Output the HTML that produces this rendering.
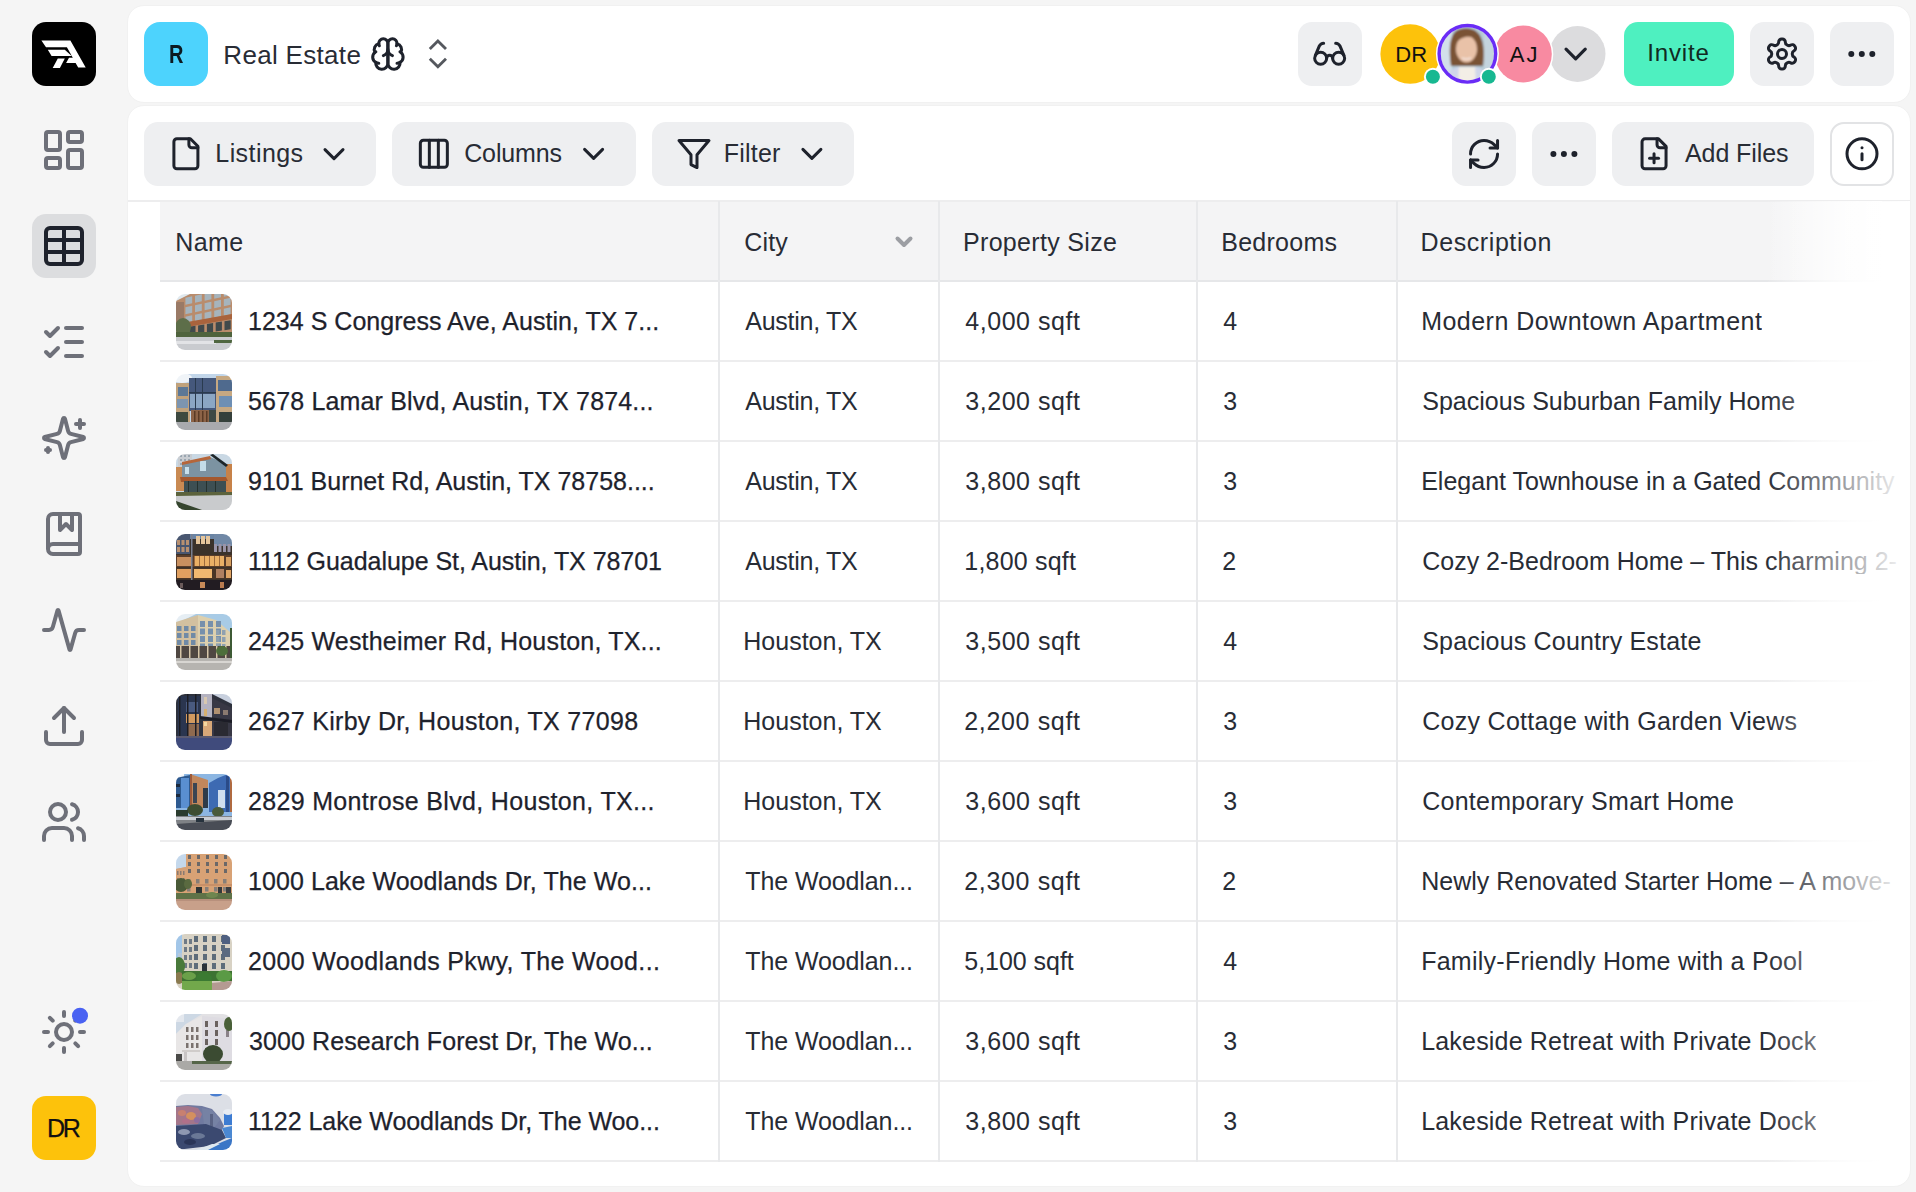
<!DOCTYPE html>
<html><head><meta charset="utf-8"><style>
html,body{margin:0;padding:0;}
body{width:1916px;height:1192px;overflow:hidden;background:#f5f5f5;position:relative;font-family:"Liberation Sans",sans-serif;}
svg{position:absolute;left:0;top:0;}
.t{position:absolute;white-space:nowrap;}
</style></head><body>
<svg width="1916" height="1192" viewBox="0 0 1916 1192"><defs><filter id="soft" x="-5%" y="-5%" width="110%" height="110%"><feGaussianBlur stdDeviation="0.7"/></filter><filter id="soft2" x="-5%" y="-5%" width="110%" height="110%"><feGaussianBlur stdDeviation="0.8"/></filter></defs><rect x="32" y="22" width="64" height="64" rx="14" fill="#000"/><path d="M41.40,40.50 L70.40,40.50 L85.70,67.60 L78.20,67.60 L75.60,63.10 L66.10,63.10 L69.00,57.70 L72.80,57.70 L66.90,47.20 L46.00,47.20Z M47.80,49.70 L64.80,49.70 L71.70,56.00 L51.60,56.00Z M57.80,58.50 L64.80,58.50 L59.90,67.90 L52.70,67.90Z" fill="#fff"/><rect x="32" y="214" width="64" height="64" rx="14" fill="#dcdddf"/><g transform="translate(40.00,126.00) scale(2)" stroke="#6e7079" stroke-width="2" fill="none" stroke-linecap="round" stroke-linejoin="round"><rect width="7" height="9" x="3" y="3" rx="1"/><rect width="7" height="5" x="14" y="3" rx="1"/><rect width="7" height="9" x="14" y="12" rx="1"/><rect width="7" height="5" x="3" y="16" rx="1"/></g><g transform="translate(40.00,222.00) scale(2)" stroke="#1e222c" stroke-width="2" fill="none" stroke-linecap="round" stroke-linejoin="round"><path d="M12 3v18"/><rect width="18" height="18" x="3" y="3" rx="2"/><path d="M3 9h18"/><path d="M3 15h18"/></g><g transform="translate(40.00,318.00) scale(2)" stroke="#6e7079" stroke-width="2" fill="none" stroke-linecap="round" stroke-linejoin="round"><path d="M13 5h8"/><path d="M13 12h8"/><path d="M13 19h8"/><path d="m3 17 2 2 4-4"/><path d="m3 7 2 2 4-4"/></g><g transform="translate(40.00,414.00) scale(2)" stroke="#6e7079" stroke-width="2" fill="none" stroke-linecap="round" stroke-linejoin="round"><path d="M9.937 15.5A2 2 0 0 0 8.5 14.063l-6.135-1.582a.5.5 0 0 1 0-.962L8.5 9.936A2 2 0 0 0 9.937 8.5l1.582-6.135a.5.5 0 0 1 .963 0L14.063 8.5A2 2 0 0 0 15.5 9.937l6.135 1.581a.5.5 0 0 1 0 .964L15.5 14.063a2 2 0 0 0-1.437 1.437l-1.582 6.135a.5.5 0 0 1-.963 0z"/><path d="M20 3v4"/><path d="M22 5h-4"/><path d="M4 17v2"/><path d="M5 18H3"/></g><g transform="translate(40.00,510.00) scale(2)" stroke="#6e7079" stroke-width="2" fill="none" stroke-linecap="round" stroke-linejoin="round"><path d="M10 2v8l3-3 3 3V2"/><path d="M4 19.5v-15A2.5 2.5 0 0 1 6.5 2H19a1 1 0 0 1 1 1v18a1 1 0 0 1-1 1H6.5a1 1 0 0 1 0-5H20"/></g><g transform="translate(40.00,606.00) scale(2)" stroke="#6e7079" stroke-width="2" fill="none" stroke-linecap="round" stroke-linejoin="round"><path d="M22 12h-2.48a2 2 0 0 0-1.93 1.46l-2.35 8.36a.25.25 0 0 1-.48 0L9.24 2.18a.25.25 0 0 0-.48 0l-2.35 8.36A2 2 0 0 1 4.49 12H2"/></g><g transform="translate(40.00,702.00) scale(2)" stroke="#6e7079" stroke-width="2" fill="none" stroke-linecap="round" stroke-linejoin="round"><path d="M12 3v12"/><path d="m17 8-5-5-5 5"/><path d="M21 15v4a2 2 0 0 1-2 2H5a2 2 0 0 1-2-2v-4"/></g><g transform="translate(40.00,798.00) scale(2)" stroke="#6e7079" stroke-width="2" fill="none" stroke-linecap="round" stroke-linejoin="round"><path d="M16 21v-2a4 4 0 0 0-4-4H6a4 4 0 0 0-4 4v2"/><circle cx="9" cy="7" r="4"/><path d="M22 21v-2a4 4 0 0 0-3-3.87"/><path d="M16 3.13a4 4 0 0 1 0 7.75"/></g><g transform="translate(40.00,1008.00) scale(2)" stroke="#6e7079" stroke-width="2" fill="none" stroke-linecap="round" stroke-linejoin="round"><circle cx="12" cy="12" r="4"/><path d="M12 2v2"/><path d="M12 20v2"/><path d="m4.93 4.93 1.41 1.41"/><path d="m17.66 17.66 1.41 1.41"/><path d="M2 12h2"/><path d="M20 12h2"/><path d="m6.34 17.66-1.41 1.41"/><path d="m19.07 4.93-1.41 1.41"/></g><circle cx="80" cy="1015.7" r="8" fill="#4a62f2"/><rect x="32" y="1096" width="64" height="64" rx="14" fill="#fdc20b"/><rect x="127.5" y="5.5" width="1783" height="97" rx="16.5" fill="#fff" stroke="#f1f1f1" stroke-width="1"/><rect x="144" y="22" width="64" height="64" rx="16" fill="#4dd3fd"/><g transform="translate(369.66,35.81) scale(1.52)" stroke="#1e222c" stroke-width="2" fill="none" stroke-linecap="round" stroke-linejoin="round"><path d="M12 5a3 3 0 1 0-5.997.125 4 4 0 0 0-2.526 5.77 4 4 0 0 0 .556 6.588A4 4 0 1 0 12 18Z"/><path d="M12 5a3 3 0 1 1 5.997.125 4 4 0 0 1 2.526 5.77 4 4 0 0 1-.556 6.588A4 4 0 1 1 12 18Z"/><path d="M15 13a4.5 4.5 0 0 1-3-4 4.5 4.5 0 0 1-3 4"/><path d="M17.599 6.5a3 3 0 0 0 .399-1.375"/><path d="M6.003 5.125A3 3 0 0 0 6.401 6.5"/><path d="M3.477 10.896a4 4 0 0 1 .585-.396"/><path d="M19.938 10.5a4 4 0 0 1 .585.396"/><path d="M6 18a4 4 0 0 1-1.967-.516"/><path d="M19.967 17.484A4 4 0 0 1 18 18"/></g><g transform="translate(418.46,34.46) scale(1.62)" stroke="#55585e" stroke-width="1.75" fill="none" stroke-linecap="butt" stroke-linejoin="miter"><path d="m7 15 5 5 5-5"/><path d="m7 9 5-5 5 5"/></g><rect x="1298" y="22" width="64" height="64" rx="14" fill="#eeeff1"/><g transform="translate(1311.65,35.80) scale(1.5)" stroke="#1e222c" stroke-width="2" fill="none" stroke-linecap="round" stroke-linejoin="round"><circle cx="6" cy="15" r="4"/><circle cx="18" cy="15" r="4"/><path d="M14 15a2 2 0 0 0-2-2 2 2 0 0 0-2 2"/><path d="M2.5 13 5 7c.7-1.3 1.4-2 3-2"/><path d="M21.5 13 19 7c-.7-1.3-1.5-2-3-2"/></g><circle cx="1577.5" cy="54" r="30" fill="#fff"/><circle cx="1577.5" cy="54" r="28" fill="#dcdcde"/><g transform="translate(1556.45,34.80) scale(1.6)" stroke="#1e222c" stroke-width="2" fill="none" stroke-linecap="round" stroke-linejoin="round"><path d="m6 9 6 6 6-6"/></g><circle cx="1523.3" cy="54" r="30" fill="#fff"/><circle cx="1523.3" cy="54" r="28.5" fill="#f88aa1"/><circle cx="1410.2" cy="54" r="29.8" fill="#fdc20b"/><circle cx="1467.4" cy="53.8" r="31.5" fill="#fff"/><clipPath id="pc"><circle cx="1467.4" cy="53.8" r="26.8"/></clipPath>
<g clip-path="url(#pc)"><g filter="url(#soft2)">
 <rect x="1438" y="24" width="60" height="60" fill="#b4cad6"/>
 <rect x="1438" y="24" width="14" height="60" fill="#d2e0ea"/>
 <rect x="1484" y="24" width="14" height="60" fill="#c4d4de"/>
 <path d="M1451,66 C1449,52 1449,38 1455,32 C1460,27 1472,27 1477,32 C1484,38 1485,52 1483,66 Z" fill="#7a5234"/>
 <ellipse cx="1466.5" cy="49" rx="10.5" ry="13.5" fill="#e9c2a8"/>
 <path d="M1455,44 C1456,34 1462,31 1468,31 C1474,31 1478,35 1478,41 C1472,35 1462,35 1455,44 Z" fill="#7a5234"/>
 <path d="M1462,58 Q1466,60 1471,58" stroke="#f4e6e0" stroke-width="1.6" fill="none"/>
 <path d="M1444,84 Q1446,70 1458,67 L1476,67 Q1488,70 1490,84 Z" fill="#d0d6ea"/>
 <path d="M1458,84 L1459,67 L1475,67 L1476,84 Z" fill="#f3eee6"/>
</g></g><circle cx="1467.4" cy="53.8" r="28.3" fill="none" stroke="#6a2cf6" stroke-width="3.4"/><circle cx="1432.9" cy="76.8" r="9" fill="#fff"/><circle cx="1432.9" cy="76.8" r="7" fill="#17b891"/><circle cx="1488.8" cy="76.8" r="9" fill="#fff"/><circle cx="1488.8" cy="76.8" r="7" fill="#17b891"/><rect x="1624" y="22" width="110" height="64" rx="14" fill="#4ef0c0"/><rect x="1750" y="22" width="64" height="64" rx="14" fill="#eeeff1"/><g transform="translate(1764.00,35.95) scale(1.5)" stroke="#1e222c" stroke-width="2" fill="none" stroke-linecap="round" stroke-linejoin="round"><path d="M12.22 2h-.44a2 2 0 0 0-2 2v.18a2 2 0 0 1-1 1.73l-.43.25a2 2 0 0 1-2 0l-.15-.08a2 2 0 0 0-2.73.73l-.22.38a2 2 0 0 0 .73 2.73l.15.1a2 2 0 0 1 1 1.72v.51a2 2 0 0 1-1 1.74l-.15.09a2 2 0 0 0-.73 2.73l.22.38a2 2 0 0 0 2.73.73l.15-.08a2 2 0 0 1 2 0l.43.25a2 2 0 0 1 1 1.73V20a2 2 0 0 0 2 2h.44a2 2 0 0 0 2-2v-.18a2 2 0 0 1 1-1.73l.43-.25a2 2 0 0 1 2 0l.15.08a2 2 0 0 0 2.73-.73l.22-.39a2 2 0 0 0-.73-2.73l-.15-.08a2 2 0 0 1-1-1.74v-.5a2 2 0 0 1 1-1.74l.15-.09a2 2 0 0 0 .73-2.73l-.22-.38a2 2 0 0 0-2.73-.73l-.15.08a2 2 0 0 1-2 0l-.43-.25a2 2 0 0 1-1-1.73V4a2 2 0 0 0-2-2z"/><circle cx="12" cy="12" r="3"/></g><rect x="1830" y="22" width="64" height="64" rx="14" fill="#eeeff1"/><g transform="translate(1843.80,35.90) scale(1.5)" stroke="#1e222c" stroke-width="2" fill="none" stroke-linecap="round" stroke-linejoin="round"><circle cx="12" cy="12" r="1"/><circle cx="19" cy="12" r="1"/><circle cx="5" cy="12" r="1"/></g><rect x="127.5" y="105.5" width="1783" height="1081" rx="16.5" fill="#fff" stroke="#f1f1f1" stroke-width="1"/><rect x="144" y="122" width="232" height="64" rx="14" fill="#eeeff1"/><rect x="392" y="122" width="244" height="64" rx="14" fill="#eeeff1"/><rect x="652" y="122" width="202" height="64" rx="14" fill="#eeeff1"/><rect x="1452" y="122" width="64" height="64" rx="14" fill="#eeeff1"/><rect x="1532" y="122" width="64" height="64" rx="14" fill="#eeeff1"/><rect x="1612" y="122" width="202" height="64" rx="14" fill="#eeeff1"/><rect x="1831" y="123" width="62" height="62" rx="13" fill="#fff" stroke="#e2e3e5" stroke-width="2"/><g transform="translate(167.90,135.70) scale(1.5)" stroke="#1e222c" stroke-width="2" fill="none" stroke-linecap="round" stroke-linejoin="round"><path d="M15 2H6a2 2 0 0 0-2 2v16a2 2 0 0 0 2 2h12a2 2 0 0 0 2-2V7Z"/><path d="M14 2v4a2 2 0 0 0 2 2h4"/></g><g transform="translate(316.00,136.15) scale(1.5)" stroke="#1e222c" stroke-width="2" fill="none" stroke-linecap="round" stroke-linejoin="round"><path d="m6 9 6 6 6-6"/></g><g transform="translate(415.85,135.80) scale(1.5)" stroke="#1e222c" stroke-width="2" fill="none" stroke-linecap="round" stroke-linejoin="round"><rect width="18" height="18" x="3" y="3" rx="2"/><path d="M9 3v18"/><path d="M15 3v18"/></g><g transform="translate(575.60,135.90) scale(1.5)" stroke="#1e222c" stroke-width="2" fill="none" stroke-linecap="round" stroke-linejoin="round"><path d="m6 9 6 6 6-6"/></g><g transform="translate(676.00,136.05) scale(1.5)" stroke="#1e222c" stroke-width="2" fill="none" stroke-linecap="round" stroke-linejoin="round"><polygon points="22 3 2 3 10 12.46 10 19 14 21 14 12.46 22 3"/></g><g transform="translate(793.90,135.90) scale(1.5)" stroke="#1e222c" stroke-width="2" fill="none" stroke-linecap="round" stroke-linejoin="round"><path d="m6 9 6 6 6-6"/></g><g transform="translate(1466.05,135.95) scale(1.5)" stroke="#1e222c" stroke-width="2" fill="none" stroke-linecap="round" stroke-linejoin="round"><path d="M3 12a9 9 0 0 1 9-9 9.75 9.75 0 0 1 6.74 2.74L21 8"/><path d="M21 3v5h-5"/><path d="M21 12a9 9 0 0 1-9 9 9.75 9.75 0 0 1-6.74-2.74L3 16"/><path d="M8 16H3v5"/></g><g transform="translate(1545.90,136.00) scale(1.5)" stroke="#1e222c" stroke-width="2" fill="none" stroke-linecap="round" stroke-linejoin="round"><circle cx="12" cy="12" r="1"/><circle cx="19" cy="12" r="1"/><circle cx="5" cy="12" r="1"/></g><g transform="translate(1636.05,135.85) scale(1.5)" stroke="#1e222c" stroke-width="2" fill="none" stroke-linecap="round" stroke-linejoin="round"><path d="M15 2H6a2 2 0 0 0-2 2v16a2 2 0 0 0 2 2h12a2 2 0 0 0 2-2V7Z"/><path d="M14 2v4a2 2 0 0 0 2 2h4"/><path d="M9 15h6"/><path d="M12 18v-6"/></g><g transform="translate(1844.00,135.85) scale(1.5)" stroke="#1e222c" stroke-width="2" fill="none" stroke-linecap="round" stroke-linejoin="round"><circle cx="12" cy="12" r="10"/><path d="M12 16v-4"/><path d="M12 8h.01"/></g><rect x="128" y="200" width="1782" height="2" fill="#ededee"/><rect x="160" y="202" width="1722" height="79" fill="#f4f4f5"/><rect x="160" y="280" width="1722" height="2" fill="#e6e7e9"/><rect x="160" y="360" width="1722" height="2" fill="#ededee"/><rect x="160" y="440" width="1722" height="2" fill="#ededee"/><rect x="160" y="520" width="1722" height="2" fill="#ededee"/><rect x="160" y="600" width="1722" height="2" fill="#ededee"/><rect x="160" y="680" width="1722" height="2" fill="#ededee"/><rect x="160" y="760" width="1722" height="2" fill="#ededee"/><rect x="160" y="840" width="1722" height="2" fill="#ededee"/><rect x="160" y="920" width="1722" height="2" fill="#ededee"/><rect x="160" y="1000" width="1722" height="2" fill="#ededee"/><rect x="160" y="1080" width="1722" height="2" fill="#ededee"/><rect x="160" y="1160" width="1722" height="2" fill="#ededee"/><rect x="718" y="201" width="2" height="961" fill="#e8e9eb"/><rect x="938" y="201" width="2" height="961" fill="#e8e9eb"/><rect x="1196" y="201" width="2" height="961" fill="#e8e9eb"/><rect x="1396" y="201" width="2" height="961" fill="#e8e9eb"/><defs><linearGradient id="fadeA" x1="0" x2="1"><stop offset="0" stop-color="#fff" stop-opacity="0"/><stop offset="1" stop-color="#fff" stop-opacity="1"/></linearGradient></defs><rect x="1765" y="201" width="117" height="961" fill="url(#fadeA)"/><path d="M897.5,238.5 L904,245 L910.5,238.5" stroke="#9c9ea3" stroke-width="4" fill="none" stroke-linecap="round" stroke-linejoin="round"/><clipPath id="th0"><rect x="176" y="294" width="56" height="56" rx="9"/></clipPath><g clip-path="url(#th0)"><g transform="translate(176,294)" filter="url(#soft)"><rect x="0" y="0" width="56" height="56" fill="#b98c6c"/><path d="M0,0 L14,0 L0,7Z" fill="#dfe8ee"/><path d="M9.4,3.7 L16.2,2.3 L16.2,9.3 L9.4,10.7Z" fill="#a6b4bd"/><path d="M19.0,1.7 L25.8,0.3 L25.8,7.3 L19.0,8.7Z" fill="#a6b4bd"/><path d="M28.6,-0.3 L35.4,-1.7 L35.4,5.3 L28.6,6.7Z" fill="#a6b4bd"/><path d="M38.2,-2.3 L45.0,-3.7 L45.0,3.3 L38.2,4.7Z" fill="#a6b4bd"/><path d="M47.8,-4.3 L54.6,-5.7 L54.6,1.3 L47.8,2.7Z" fill="#a6b4bd"/><path d="M9.4,13.2 L16.2,11.8 L16.2,18.8 L9.4,20.2Z" fill="#a6b4bd"/><path d="M19.0,11.2 L25.8,9.8 L25.8,16.8 L19.0,18.2Z" fill="#a6b4bd"/><path d="M28.6,9.2 L35.4,7.8 L35.4,14.8 L28.6,16.2Z" fill="#a6b4bd"/><path d="M38.2,7.2 L45.0,5.8 L45.0,12.8 L38.2,14.2Z" fill="#a6b4bd"/><path d="M47.8,5.2 L54.6,3.8 L54.6,10.8 L47.8,12.2Z" fill="#a6b4bd"/><path d="M9.4,22.7 L16.2,21.3 L16.2,28.3 L9.4,29.7Z" fill="#a6b4bd"/><path d="M19.0,20.7 L25.8,19.3 L25.8,26.3 L19.0,27.7Z" fill="#a6b4bd"/><path d="M28.6,18.7 L35.4,17.3 L35.4,24.3 L28.6,25.7Z" fill="#a6b4bd"/><path d="M38.2,16.7 L45.0,15.3 L45.0,22.3 L38.2,23.7Z" fill="#a6b4bd"/><path d="M47.8,14.7 L54.6,13.3 L54.6,20.3 L47.8,21.7Z" fill="#a6b4bd"/><path d="M0,30 L56,20 L56,25 L0,35Z" fill="#a9643e"/><path d="M13.3,32.8 L19.5,31.8 L19.5,40.8 L13.3,41.8Z" fill="#3f484c"/><path d="M22.1,31.4 L28.3,30.4 L28.3,39.4 L22.1,40.4Z" fill="#3f484c"/><path d="M30.9,30.0 L37.1,29.0 L37.1,38.0 L30.9,39.0Z" fill="#3f484c"/><path d="M39.7,28.6 L45.9,27.6 L45.9,36.6 L39.7,37.6Z" fill="#3f484c"/><path d="M48.5,27.2 L54.7,26.2 L54.7,35.2 L48.5,36.2Z" fill="#3f484c"/><rect x="0" y="8" width="8" height="36" fill="#9a7a66"/><ellipse cx="7" cy="33" rx="8" ry="9" fill="#5d6e4a"/><rect x="0" y="38" width="56" height="6" fill="#50633c"/><rect x="0" y="43" width="56" height="13" fill="#c9cbcf"/><rect x="0" y="47" width="40" height="3" fill="#e2e3e6"/><rect x="38" y="46" width="18" height="3" fill="#4f6640"/></g></g><clipPath id="th1"><rect x="176" y="374" width="56" height="56" rx="9"/></clipPath><g clip-path="url(#th1)"><g transform="translate(176,374)" filter="url(#soft)"><rect x="0" y="0" width="56" height="56" fill="#c2d6ea"/><ellipse cx="6" cy="4" rx="10" ry="5" fill="#f0f4f8"/><rect x="0" y="9" width="14" height="40" fill="#c0a27c"/><rect x="2" y="13" width="10" height="9" fill="#5d7896"/><rect x="1" y="25" width="11" height="9" fill="#7d95b0"/><rect x="40" y="2" width="16" height="47" fill="#c6a882"/><rect x="42" y="6" width="14" height="11" fill="#4f6a8e"/><rect x="43" y="22" width="13" height="11" fill="#6e8fb4"/><rect x="13" y="4" width="27" height="33" fill="#44597c"/><rect x="14" y="20" width="25" height="14" fill="#8ba6c4"/><rect x="19" y="4" width="1" height="33" fill="#2c3a50"/><rect x="26" y="4" width="1" height="33" fill="#2c3a50"/><rect x="13" y="18" width="27" height="1.5" fill="#2c3a50"/><rect x="15" y="36" width="18" height="13" fill="#8c6446"/><rect x="18" y="37" width="1.5" height="12" fill="#5a3a26"/><rect x="22" y="37" width="1.5" height="12" fill="#5a3a26"/><rect x="26" y="37" width="1.5" height="12" fill="#5a3a26"/><rect x="30" y="37" width="1.5" height="12" fill="#5a3a26"/><rect x="33" y="36" width="7" height="13" fill="#3c4a44"/><rect x="0" y="38" width="12" height="10" fill="#3c4a40"/><rect x="43" y="38" width="13" height="10" fill="#34403a"/><rect x="0" y="48" width="56" height="8" fill="#a9aaae"/></g></g><clipPath id="th2"><rect x="176" y="454" width="56" height="56" rx="9"/></clipPath><g clip-path="url(#th2)"><g transform="translate(176,454)" filter="url(#soft)"><rect x="0" y="0" width="56" height="56" fill="#c9d8e4"/><rect x="2" y="0" width="14" height="14" fill="#c9cdd2"/><rect x="4" y="1" width="2" height="2" fill="#9aa6b0"/><rect x="4" y="5" width="2" height="2" fill="#9aa6b0"/><rect x="4" y="9" width="2" height="2" fill="#9aa6b0"/><rect x="8" y="1" width="2" height="2" fill="#9aa6b0"/><rect x="8" y="5" width="2" height="2" fill="#9aa6b0"/><rect x="8" y="9" width="2" height="2" fill="#9aa6b0"/><rect x="12" y="1" width="2" height="2" fill="#9aa6b0"/><rect x="12" y="5" width="2" height="2" fill="#9aa6b0"/><rect x="12" y="9" width="2" height="2" fill="#9aa6b0"/><rect x="0" y="13" width="8" height="24" fill="#c98a52"/><rect x="48" y="10" width="8" height="30" fill="#c7824a"/><path d="M6,10 L34,3 L50,10 L50,25 L6,25Z" fill="#7b93a2"/><rect x="24" y="7" width="6" height="10" fill="#c4dce8"/><rect x="9" y="13" width="4" height="7" fill="#c8e0ec"/><path d="M6,8 L34,2 L35,5 L6,11Z" fill="#b5663a"/><path d="M34,1 L37,0 L52,11 L50,13Z" fill="#1f2529"/><path d="M4,23 L50,23 L52,27 L5,28Z" fill="#a4582f"/><rect x="8" y="27" width="42" height="15" fill="#3d4f52"/><rect x="12" y="27" width="1" height="15" fill="#26302f"/><rect x="21" y="27" width="1" height="15" fill="#26302f"/><rect x="30" y="27" width="1" height="15" fill="#26302f"/><rect x="39" y="27" width="1" height="15" fill="#26302f"/><rect x="0" y="38" width="56" height="7" fill="#5b633c"/><path d="M0,42 L56,41 L56,56 L0,56Z" fill="#c9cbcd"/><path d="M0,47 L26,56 L0,56Z" fill="#36452f"/></g></g><clipPath id="th3"><rect x="176" y="534" width="56" height="56" rx="9"/></clipPath><g clip-path="url(#th3)"><g transform="translate(176,534)" filter="url(#soft)"><rect x="0" y="0" width="56" height="56" fill="#3a302c"/><rect x="0" y="0" width="56" height="5" fill="#6a84a4"/><rect x="38" y="0" width="18" height="12" fill="#7088a6"/><rect x="0" y="0" width="14" height="20" fill="#4a5670"/><rect x="1.0" y="6" width="3" height="5" fill="#b89070"/><rect x="1.0" y="13" width="3" height="5" fill="#b89070"/><rect x="5.5" y="6" width="3" height="5" fill="#b89070"/><rect x="5.5" y="13" width="3" height="5" fill="#b89070"/><rect x="10.0" y="6" width="3" height="5" fill="#b89070"/><rect x="10.0" y="13" width="3" height="5" fill="#b89070"/><rect x="20" y="2" width="4" height="8" fill="#e4c49a"/><rect x="25" y="2" width="4" height="8" fill="#e4c49a"/><rect x="30" y="2" width="4" height="8" fill="#e4c49a"/><rect x="38.0" y="10" width="3" height="8" fill="#9a94a8"/><rect x="42.5" y="10" width="3" height="8" fill="#9a94a8"/><rect x="47.0" y="10" width="3" height="8" fill="#9a94a8"/><rect x="51.5" y="10" width="3" height="8" fill="#9a94a8"/><rect x="0" y="21" width="56" height="12" fill="#5a3e2c"/><rect x="18" y="22" width="30" height="10" fill="#eab066"/><rect x="1" y="23" width="14" height="9" fill="#c89060"/><rect x="18" y="22" width="0.8" height="10" fill="#8a5a34"/><rect x="23" y="22" width="0.8" height="10" fill="#8a5a34"/><rect x="28" y="22" width="0.8" height="10" fill="#8a5a34"/><rect x="33" y="22" width="0.8" height="10" fill="#8a5a34"/><rect x="38" y="22" width="0.8" height="10" fill="#8a5a34"/><rect x="43" y="22" width="0.8" height="10" fill="#8a5a34"/><rect x="50" y="23" width="5" height="9" fill="#d8a060"/><rect x="0" y="34" width="56" height="11" fill="#4a3428"/><rect x="1" y="35" width="14" height="9" fill="#e0a060"/><rect x="18" y="35" width="18" height="9" fill="#f0b870"/><rect x="40" y="35" width="8" height="9" fill="#b08060"/><rect x="50" y="36" width="5" height="8" fill="#e0a464"/><rect x="15" y="0" width="1.5" height="56" fill="#7a8090"/><rect x="0" y="46" width="56" height="10" fill="#221e22"/><rect x="24" y="48" width="5" height="6" fill="#c88a58"/><rect x="44" y="48" width="4" height="6" fill="#b87a50"/><rect x="4" y="49" width="3" height="5" fill="#6a5a5a"/></g></g><clipPath id="th4"><rect x="176" y="614" width="56" height="56" rx="9"/></clipPath><g clip-path="url(#th4)"><g transform="translate(176,614)" filter="url(#soft)"><rect x="0" y="0" width="56" height="56" fill="#a8cbe6"/><path d="M0,0 L20,0 L0,10Z" fill="#e6eef4"/><path d="M0,8 L22,1 L22,44 L0,44Z" fill="#d2c0a0"/><path d="M22,1 L40,6 L54,18 L54,44 L22,44Z" fill="#ddd0ae"/><rect x="1" y="12" width="4.5" height="5" fill="#6f8aa6"/><rect x="1" y="19" width="4.5" height="5" fill="#6f8aa6"/><rect x="1" y="26" width="4.5" height="5" fill="#6f8aa6"/><rect x="1" y="33" width="4.5" height="5" fill="#6f8aa6"/><rect x="8" y="12" width="4.5" height="5" fill="#6f8aa6"/><rect x="8" y="19" width="4.5" height="5" fill="#6f8aa6"/><rect x="8" y="26" width="4.5" height="5" fill="#6f8aa6"/><rect x="8" y="33" width="4.5" height="5" fill="#6f8aa6"/><rect x="15" y="12" width="4.5" height="5" fill="#6f8aa6"/><rect x="15" y="19" width="4.5" height="5" fill="#6f8aa6"/><rect x="15" y="26" width="4.5" height="5" fill="#6f8aa6"/><rect x="15" y="33" width="4.5" height="5" fill="#6f8aa6"/><rect x="24" y="7.0" width="5" height="6" fill="#7690ac"/><rect x="24" y="14.5" width="5" height="6" fill="#7690ac"/><rect x="24" y="22.0" width="5" height="6" fill="#7690ac"/><rect x="24" y="29.5" width="5" height="6" fill="#7690ac"/><rect x="32" y="7.0" width="5" height="6" fill="#7690ac"/><rect x="32" y="14.5" width="5" height="6" fill="#7690ac"/><rect x="32" y="22.0" width="5" height="6" fill="#7690ac"/><rect x="32" y="29.5" width="5" height="6" fill="#7690ac"/><rect x="40" y="7.0" width="5" height="6" fill="#7690ac"/><rect x="40" y="14.5" width="5" height="6" fill="#7690ac"/><rect x="40" y="22.0" width="5" height="6" fill="#7690ac"/><rect x="40" y="29.5" width="5" height="6" fill="#7690ac"/><rect x="40" y="16" width="3.5" height="5" fill="#8ea0b0"/><rect x="40" y="23" width="3.5" height="5" fill="#8ea0b0"/><rect x="40" y="30" width="3.5" height="5" fill="#8ea0b0"/><rect x="46" y="16" width="3.5" height="5" fill="#8ea0b0"/><rect x="46" y="23" width="3.5" height="5" fill="#8ea0b0"/><rect x="46" y="30" width="3.5" height="5" fill="#8ea0b0"/><rect x="0" y="32" width="54" height="12" fill="#4f4742"/><rect x="4" y="32" width="1.5" height="12" fill="#d6c6a8"/><rect x="13" y="32" width="1.5" height="12" fill="#d6c6a8"/><rect x="22" y="32" width="1.5" height="12" fill="#d6c6a8"/><rect x="31" y="32" width="1.5" height="12" fill="#d6c6a8"/><rect x="40" y="32" width="1.5" height="12" fill="#d6c6a8"/><rect x="49" y="32" width="1.5" height="12" fill="#d6c6a8"/><ellipse cx="46" cy="37" rx="6" ry="5" fill="#4e6e3a"/><rect x="54" y="14" width="2" height="30" fill="#3e5a34"/><rect x="0" y="44" width="56" height="12" fill="#b6b4b0"/><rect x="0" y="47" width="56" height="2" fill="#d8d6d2"/></g></g><clipPath id="th5"><rect x="176" y="694" width="56" height="56" rx="9"/></clipPath><g clip-path="url(#th5)"><g transform="translate(176,694)" filter="url(#soft)"><rect x="0" y="0" width="56" height="56" fill="#2e323e"/><path d="M36,0 L56,0 L56,10Z" fill="#c8d0de"/><rect x="2" y="2" width="22" height="40" fill="#2c3650"/><rect x="10" y="8" width="12" height="10" fill="#4a5a80"/><rect x="10" y="20" width="13" height="9" fill="#d29a5e"/><rect x="12" y="30" width="11" height="12" fill="#8e6a50"/><rect x="3" y="0" width="1.5" height="44" fill="#1a1c24"/><rect x="11" y="0" width="1.5" height="44" fill="#1a1c24"/><rect x="19" y="0" width="1.5" height="44" fill="#1a1c24"/><rect x="25" y="0" width="11" height="24" fill="#b4b2c0"/><rect x="28" y="3" width="3" height="7" fill="#d8c8b0"/><rect x="28" y="15" width="3" height="7" fill="#d6b070"/><path d="M36,4 L56,14 L56,44 L36,44Z" fill="#383844"/><rect x="38" y="14" width="6" height="6" fill="#b09070"/><rect x="47" y="16" width="5" height="5" fill="#8a7a70"/><path d="M24,22 L56,26 L56,29 L24,25Z" fill="#1e1f26"/><rect x="27" y="27" width="9" height="15" fill="#d8a878"/><rect x="28" y="28" width="3" height="4" fill="#f4d8a0"/><rect x="38" y="28" width="14" height="14" fill="#2a2a30"/><rect x="0" y="42" width="56" height="14" fill="#3f4b7c"/><rect x="0" y="42" width="56" height="2" fill="#5a5a70"/></g></g><clipPath id="th6"><rect x="176" y="774" width="56" height="56" rx="9"/></clipPath><g clip-path="url(#th6)"><g transform="translate(176,774)" filter="url(#soft)"><rect x="0" y="0" width="56" height="56" fill="#8cb6e2"/><rect x="0" y="0" width="8" height="6" fill="#f2f4f6"/><path d="M0,4 L14,1 L14,34 L0,34Z" fill="#2f5a90"/><rect x="5" y="4" width="8" height="30" fill="#5a8fd0"/><rect x="0" y="10" width="4" height="3" fill="#1e2a3c"/><rect x="0" y="20" width="4" height="3" fill="#1e2a3c"/><path d="M14,0 L32,6 L32,34 L14,34Z" fill="#c1875c"/><rect x="17" y="9" width="4" height="20" fill="#3a4452"/><rect x="27" y="14" width="5" height="20" fill="#2e3a48"/><rect x="14" y="0" width="2" height="34" fill="#9c5a3a"/><path d="M33,9 L42,4 L52,0 L56,2 L56,38 L33,38Z" fill="#3c6ab2"/><rect x="42" y="16" width="7" height="18" fill="#d0deee"/><rect x="50" y="2" width="3" height="36" fill="#2c4c88"/><rect x="54" y="0" width="2" height="38" fill="#b06a40"/><ellipse cx="19" cy="36" rx="8" ry="6" fill="#3e4e32"/><ellipse cx="42" cy="38" rx="6" ry="5" fill="#4a5a3a"/><rect x="0" y="36" width="12" height="6" fill="#2a3a2e"/><rect x="0" y="42" width="56" height="14" fill="#7f8286"/><rect x="0" y="43" width="56" height="3" fill="#c8ccd2"/><rect x="20" y="44" width="8" height="4" fill="#26303c"/><path d="M0,50 L56,46 L56,56 L0,56Z" fill="#4a4e56"/></g></g><clipPath id="th7"><rect x="176" y="854" width="56" height="56" rx="9"/></clipPath><g clip-path="url(#th7)"><g transform="translate(176,854)" filter="url(#soft)"><rect x="0" y="0" width="56" height="56" fill="#d8a274"/><path d="M0,0 L10,0 L10,13 L0,15Z" fill="#c4d8ec"/><path d="M0,15 L10,13 L10,20 L0,20Z" fill="#d4a27a"/><rect x="12" y="1" width="3" height="4" fill="#6a6868"/><rect x="12" y="8" width="3" height="4" fill="#6a6868"/><rect x="12" y="15" width="3" height="4" fill="#6a6868"/><rect x="21" y="1" width="3" height="4" fill="#6a6868"/><rect x="21" y="8" width="3" height="4" fill="#6a6868"/><rect x="21" y="15" width="3" height="4" fill="#6a6868"/><rect x="30" y="1" width="3" height="4" fill="#6a6868"/><rect x="30" y="8" width="3" height="4" fill="#6a6868"/><rect x="30" y="15" width="3" height="4" fill="#6a6868"/><rect x="39" y="1" width="3" height="4" fill="#6a6868"/><rect x="39" y="8" width="3" height="4" fill="#6a6868"/><rect x="39" y="15" width="3" height="4" fill="#6a6868"/><rect x="48" y="1" width="3" height="4" fill="#6a6868"/><rect x="48" y="8" width="3" height="4" fill="#6a6868"/><rect x="48" y="15" width="3" height="4" fill="#6a6868"/><rect x="1" y="17" width="1.5" height="4" fill="#8a7a70"/><rect x="1" y="24" width="1.5" height="4" fill="#8a7a70"/><rect x="4" y="17" width="1.5" height="4" fill="#8a7a70"/><rect x="4" y="24" width="1.5" height="4" fill="#8a7a70"/><rect x="7" y="17" width="1.5" height="4" fill="#8a7a70"/><rect x="7" y="24" width="1.5" height="4" fill="#8a7a70"/><rect x="11" y="25" width="3.5" height="4.5" fill="#867e78"/><rect x="11" y="33" width="3.5" height="4.5" fill="#867e78"/><rect x="20" y="25" width="3.5" height="4.5" fill="#867e78"/><rect x="20" y="33" width="3.5" height="4.5" fill="#867e78"/><rect x="29" y="25" width="3.5" height="4.5" fill="#867e78"/><rect x="29" y="33" width="3.5" height="4.5" fill="#867e78"/><rect x="38" y="25" width="3.5" height="4.5" fill="#867e78"/><rect x="38" y="33" width="3.5" height="4.5" fill="#867e78"/><rect x="47" y="25" width="3.5" height="4.5" fill="#867e78"/><rect x="47" y="33" width="3.5" height="4.5" fill="#867e78"/><rect x="8" y="30" width="48" height="2" fill="#c89068"/><rect x="20" y="33" width="6" height="8" fill="#2e3434"/><rect x="42" y="33" width="4" height="8" fill="#34383a"/><rect x="50" y="33" width="5" height="8" fill="#3a3e40"/><ellipse cx="5" cy="31" rx="7" ry="7" fill="#4a5a38"/><ellipse cx="12" cy="30" rx="4" ry="5" fill="#5a6a40"/><rect x="0" y="39" width="56" height="6" fill="#5e7246"/><ellipse cx="36" cy="41" rx="6" ry="3" fill="#6e8650"/><rect x="0" y="45" width="56" height="11" fill="#c8a08a"/><rect x="0" y="45" width="56" height="2" fill="#b8907c"/></g></g><clipPath id="th8"><rect x="176" y="934" width="56" height="56" rx="9"/></clipPath><g clip-path="url(#th8)"><g transform="translate(176,934)" filter="url(#soft)"><rect x="0" y="0" width="56" height="56" fill="#d8d2c4"/><path d="M0,0 L6,0 L6,26 L0,26Z" fill="#a2c6e8"/><rect x="2" y="19" width="4" height="7" fill="#b4c8dc"/><rect x="8" y="5" width="3" height="5" fill="#6e7a86"/><rect x="8" y="13" width="3" height="5" fill="#6e7a86"/><rect x="8" y="21" width="3" height="5" fill="#6e7a86"/><rect x="8" y="29" width="3" height="5" fill="#6e7a86"/><rect x="13" y="5" width="3" height="5" fill="#6e7a86"/><rect x="13" y="13" width="3" height="5" fill="#6e7a86"/><rect x="13" y="21" width="3" height="5" fill="#6e7a86"/><rect x="13" y="29" width="3" height="5" fill="#6e7a86"/><rect x="18" y="2" width="4" height="6" fill="#5d6c7a"/><rect x="18" y="11" width="4" height="6" fill="#5d6c7a"/><rect x="18" y="20" width="4" height="6" fill="#5d6c7a"/><rect x="18" y="29" width="4" height="6" fill="#5d6c7a"/><rect x="27" y="2" width="4" height="6" fill="#5d6c7a"/><rect x="27" y="11" width="4" height="6" fill="#5d6c7a"/><rect x="27" y="20" width="4" height="6" fill="#5d6c7a"/><rect x="27" y="29" width="4" height="6" fill="#5d6c7a"/><rect x="36" y="2" width="4" height="6" fill="#5d6c7a"/><rect x="36" y="11" width="4" height="6" fill="#5d6c7a"/><rect x="36" y="20" width="4" height="6" fill="#5d6c7a"/><rect x="36" y="29" width="4" height="6" fill="#5d6c7a"/><rect x="45" y="2" width="4" height="6" fill="#5d6c7a"/><rect x="45" y="11" width="4" height="6" fill="#5d6c7a"/><rect x="45" y="20" width="4" height="6" fill="#5d6c7a"/><rect x="45" y="29" width="4" height="6" fill="#5d6c7a"/><rect x="46" y="1" width="8" height="9" fill="#4f6080"/><rect x="46" y="14" width="8" height="9" fill="#5a6a80"/><rect x="26" y="30" width="5" height="8" fill="#2c3038"/><ellipse cx="3" cy="32" rx="6" ry="9" fill="#4a7a3a"/><ellipse cx="3" cy="44" rx="5" ry="6" fill="#8a7a50"/><rect x="6" y="37" width="50" height="10" fill="#3e7232"/><ellipse cx="13" cy="42" rx="7" ry="4" fill="#6aa04a"/><ellipse cx="28" cy="44" rx="8" ry="6" fill="#3a7a30"/><ellipse cx="48" cy="42" rx="8" ry="6" fill="#5a9a44"/><rect x="6" y="47" width="30" height="9" fill="#72a84c"/><path d="M36,49 L56,47 L56,56 L36,56Z" fill="#b49a92"/></g></g><clipPath id="th9"><rect x="176" y="1014" width="56" height="56" rx="9"/></clipPath><g clip-path="url(#th9)"><g transform="translate(176,1014)" filter="url(#soft)"><rect x="0" y="0" width="56" height="56" fill="#e2e1e4"/><path d="M0,0 L26,0 L10,10 L0,20Z" fill="#cdd8e4"/><rect x="0" y="0" width="8" height="8" fill="#e4e8ee"/><path d="M0,20 L10,10 L26,2 L26,48 L0,48Z" fill="#e8e6e6"/><path d="M26,2 L48,4 L56,10 L56,48 L26,48Z" fill="#dedce2"/><rect x="10" y="13" width="2.5" height="5" fill="#7a726e"/><rect x="10" y="21" width="2.5" height="5" fill="#7a726e"/><rect x="10" y="29" width="2.5" height="5" fill="#7a726e"/><rect x="15" y="13" width="2.5" height="5" fill="#7a726e"/><rect x="15" y="21" width="2.5" height="5" fill="#7a726e"/><rect x="15" y="29" width="2.5" height="5" fill="#7a726e"/><rect x="20" y="13" width="2.5" height="5" fill="#7a726e"/><rect x="20" y="21" width="2.5" height="5" fill="#7a726e"/><rect x="20" y="29" width="2.5" height="5" fill="#7a726e"/><rect x="29" y="7" width="3" height="6" fill="#6a625e"/><rect x="29" y="16" width="3" height="6" fill="#6a625e"/><rect x="29" y="25" width="3" height="6" fill="#6a625e"/><rect x="29" y="34" width="3" height="6" fill="#6a625e"/><rect x="39" y="7" width="3" height="6" fill="#6a625e"/><rect x="39" y="16" width="3" height="6" fill="#6a625e"/><rect x="39" y="25" width="3" height="6" fill="#6a625e"/><rect x="39" y="34" width="3" height="6" fill="#6a625e"/><rect x="50" y="16" width="3" height="7" fill="#8a8288"/><rect x="6" y="36" width="18" height="2" fill="#d0ccca"/><rect x="8" y="38" width="3" height="11" fill="#c8c4c4"/><rect x="0" y="40" width="6" height="8" fill="#4a4a46"/><ellipse cx="37" cy="40" rx="10" ry="9" fill="#3a4c30"/><ellipse cx="53" cy="10" rx="5" ry="7" fill="#4a6038"/><rect x="0" y="47" width="56" height="9" fill="#aaa9a6"/><rect x="16" y="47" width="40" height="3" fill="#56664a"/></g></g><clipPath id="th10"><rect x="176" y="1094" width="56" height="56" rx="9"/></clipPath><g clip-path="url(#th10)"><g transform="translate(176,1094)" filter="url(#soft)"><rect x="0" y="0" width="56" height="56" fill="#dcdfe6"/><ellipse cx="40" cy="0" rx="6" ry="2.5" fill="#4a7ed0"/><rect x="48" y="17" width="8" height="14" fill="#3d7bd2"/><ellipse cx="52" cy="18" rx="5" ry="3" fill="#e8ecf2"/><path d="M0,12 L12,11 L26,12 L36,15 L44,24 L48,32 L46,36 L0,36Z" fill="#707aa0"/><path d="M0,13 L12,12 L22,14 L26,20 L22,30 L0,31Z" fill="#a4768a"/><ellipse cx="15" cy="22" rx="5" ry="4" fill="#d4905e"/><ellipse cx="6" cy="19" rx="4" ry="3" fill="#c88070"/><ellipse cx="21" cy="26" rx="3" ry="3" fill="#8e6ea0"/><ellipse cx="10" cy="27" rx="4" ry="2.5" fill="#b0708a"/><path d="M26,14 L36,16 L44,26 L38,34 L28,30Z" fill="#7682a4"/><rect x="34" y="20" width="3" height="14" fill="#5a6484"/><path d="M0,32 L30,30 L46,36 L50,44 L34,52 L0,56Z" fill="#3a4870"/><ellipse cx="8" cy="38" rx="6" ry="3" fill="#8e98b2"/><ellipse cx="22" cy="42" rx="7" ry="3" fill="#6a7896"/><ellipse cx="14" cy="48" rx="6" ry="3" fill="#2c3658"/><path d="M30,56 L46,48 L56,44 L56,56Z" fill="#3b76c6"/><path d="M46,34 L56,32 L56,44 L50,44Z" fill="#4c88d2"/><path d="M20,56 L36,50 L44,50 L32,56Z" fill="#dfe8ee"/></g></g><defs><linearGradient id="fade" x1="0" x2="1"><stop offset="0" stop-color="#fff" stop-opacity="0"/><stop offset="1" stop-color="#fff" stop-opacity="1"/></linearGradient></defs></svg>
<div class="t" style="left:248.00px;top:309.14px;font-size:25px;line-height:25px;color:#1e222c;letter-spacing:0.020px;-webkit-text-stroke:0.25px currentColor;">1234 S Congress Ave, Austin, TX 7...</div><div class="t" style="left:745.30px;top:309.14px;font-size:25px;line-height:25px;color:#282c35;letter-spacing:-0.272px;">Austin, TX</div><div class="t" style="left:965.30px;top:309.14px;font-size:25px;line-height:25px;color:#282c35;letter-spacing:0.538px;">4,000 sqft</div><div class="t" style="left:1223.20px;top:309.14px;font-size:25px;line-height:25px;color:#282c35;">4</div><div class="t" style="left:1421.20px;top:309.14px;font-size:25px;line-height:25px;color:#282c35;letter-spacing:0.472px;max-width:480px;overflow:hidden;">Modern Downtown Apartment</div><div class="t" style="left:248.00px;top:389.14px;font-size:25px;line-height:25px;color:#1e222c;letter-spacing:0.169px;-webkit-text-stroke:0.25px currentColor;">5678 Lamar Blvd, Austin, TX 7874...</div><div class="t" style="left:745.30px;top:389.14px;font-size:25px;line-height:25px;color:#282c35;letter-spacing:-0.272px;">Austin, TX</div><div class="t" style="left:965.30px;top:389.14px;font-size:25px;line-height:25px;color:#282c35;letter-spacing:0.538px;">3,200 sqft</div><div class="t" style="left:1223.20px;top:389.14px;font-size:25px;line-height:25px;color:#282c35;">3</div><div class="t" style="left:1422.20px;top:389.14px;font-size:25px;line-height:25px;color:#282c35;letter-spacing:0.022px;max-width:479px;overflow:hidden;">Spacious Suburban Family Home</div><div class="t" style="left:248.00px;top:469.14px;font-size:25px;line-height:25px;color:#1e222c;-webkit-text-stroke:0.25px currentColor;">9101 Burnet Rd, Austin, TX 78758....</div><div class="t" style="left:745.30px;top:469.14px;font-size:25px;line-height:25px;color:#282c35;letter-spacing:-0.272px;">Austin, TX</div><div class="t" style="left:965.30px;top:469.14px;font-size:25px;line-height:25px;color:#282c35;letter-spacing:0.538px;">3,800 sqft</div><div class="t" style="left:1223.20px;top:469.14px;font-size:25px;line-height:25px;color:#282c35;">3</div><div class="t" style="left:1421.20px;top:469.14px;font-size:25px;line-height:25px;color:#282c35;max-width:480px;overflow:hidden;">Elegant Townhouse in a Gated Community</div><div class="t" style="left:248.00px;top:549.14px;font-size:25px;line-height:25px;color:#1e222c;letter-spacing:-0.048px;-webkit-text-stroke:0.25px currentColor;">1112 Guadalupe St, Austin, TX 78701</div><div class="t" style="left:745.30px;top:549.14px;font-size:25px;line-height:25px;color:#282c35;letter-spacing:-0.272px;">Austin, TX</div><div class="t" style="left:964.30px;top:549.14px;font-size:25px;line-height:25px;color:#282c35;letter-spacing:0.205px;">1,800 sqft</div><div class="t" style="left:1222.20px;top:549.14px;font-size:25px;line-height:25px;color:#282c35;">2</div><div class="t" style="left:1422.20px;top:549.14px;font-size:25px;line-height:25px;color:#282c35;max-width:479px;overflow:hidden;">Cozy 2-Bedroom Home – This charming 2-</div><div class="t" style="left:248.00px;top:629.14px;font-size:25px;line-height:25px;color:#1e222c;letter-spacing:0.188px;-webkit-text-stroke:0.25px currentColor;">2425 Westheimer Rd, Houston, TX...</div><div class="t" style="left:743.30px;top:629.14px;font-size:25px;line-height:25px;color:#282c35;">Houston, TX</div><div class="t" style="left:965.30px;top:629.14px;font-size:25px;line-height:25px;color:#282c35;letter-spacing:0.538px;">3,500 sqft</div><div class="t" style="left:1223.20px;top:629.14px;font-size:25px;line-height:25px;color:#282c35;">4</div><div class="t" style="left:1422.20px;top:629.14px;font-size:25px;line-height:25px;color:#282c35;letter-spacing:0.180px;max-width:479px;overflow:hidden;">Spacious Country Estate</div><div class="t" style="left:248.00px;top:709.14px;font-size:25px;line-height:25px;color:#1e222c;letter-spacing:0.317px;-webkit-text-stroke:0.25px currentColor;">2627 Kirby Dr, Houston, TX 77098</div><div class="t" style="left:743.30px;top:709.14px;font-size:25px;line-height:25px;color:#282c35;">Houston, TX</div><div class="t" style="left:964.30px;top:709.14px;font-size:25px;line-height:25px;color:#282c35;letter-spacing:0.649px;">2,200 sqft</div><div class="t" style="left:1223.20px;top:709.14px;font-size:25px;line-height:25px;color:#282c35;">3</div><div class="t" style="left:1422.20px;top:709.14px;font-size:25px;line-height:25px;color:#282c35;letter-spacing:0.294px;max-width:479px;overflow:hidden;">Cozy Cottage with Garden Views</div><div class="t" style="left:248.00px;top:789.14px;font-size:25px;line-height:25px;color:#1e222c;letter-spacing:0.331px;-webkit-text-stroke:0.25px currentColor;">2829 Montrose Blvd, Houston, TX...</div><div class="t" style="left:743.30px;top:789.14px;font-size:25px;line-height:25px;color:#282c35;">Houston, TX</div><div class="t" style="left:965.30px;top:789.14px;font-size:25px;line-height:25px;color:#282c35;letter-spacing:0.538px;">3,600 sqft</div><div class="t" style="left:1223.20px;top:789.14px;font-size:25px;line-height:25px;color:#282c35;">3</div><div class="t" style="left:1422.20px;top:789.14px;font-size:25px;line-height:25px;color:#282c35;letter-spacing:0.275px;max-width:479px;overflow:hidden;">Contemporary Smart Home</div><div class="t" style="left:248.00px;top:869.14px;font-size:25px;line-height:25px;color:#1e222c;letter-spacing:0.071px;-webkit-text-stroke:0.25px currentColor;">1000 Lake Woodlands Dr, The Wo...</div><div class="t" style="left:745.30px;top:869.14px;font-size:25px;line-height:25px;color:#282c35;letter-spacing:-0.103px;">The Woodlan...</div><div class="t" style="left:964.30px;top:869.14px;font-size:25px;line-height:25px;color:#282c35;letter-spacing:0.649px;">2,300 sqft</div><div class="t" style="left:1222.20px;top:869.14px;font-size:25px;line-height:25px;color:#282c35;">2</div><div class="t" style="left:1421.20px;top:869.14px;font-size:25px;line-height:25px;color:#282c35;max-width:480px;overflow:hidden;">Newly Renovated Starter Home – A move-</div><div class="t" style="left:248.00px;top:949.14px;font-size:25px;line-height:25px;color:#1e222c;letter-spacing:0.346px;-webkit-text-stroke:0.25px currentColor;">2000 Woodlands Pkwy, The Wood...</div><div class="t" style="left:745.30px;top:949.14px;font-size:25px;line-height:25px;color:#282c35;letter-spacing:-0.103px;">The Woodlan...</div><div class="t" style="left:964.30px;top:949.14px;font-size:25px;line-height:25px;color:#282c35;letter-spacing:-0.040px;">5,100 sqft</div><div class="t" style="left:1223.20px;top:949.14px;font-size:25px;line-height:25px;color:#282c35;">4</div><div class="t" style="left:1421.20px;top:949.14px;font-size:25px;line-height:25px;color:#282c35;letter-spacing:0.253px;max-width:480px;overflow:hidden;">Family-Friendly Home with a Pool</div><div class="t" style="left:249.00px;top:1029.14px;font-size:25px;line-height:25px;color:#1e222c;letter-spacing:0.095px;-webkit-text-stroke:0.25px currentColor;">3000 Research Forest Dr, The Wo...</div><div class="t" style="left:745.30px;top:1029.14px;font-size:25px;line-height:25px;color:#282c35;letter-spacing:-0.103px;">The Woodlan...</div><div class="t" style="left:965.30px;top:1029.14px;font-size:25px;line-height:25px;color:#282c35;letter-spacing:0.538px;">3,600 sqft</div><div class="t" style="left:1223.20px;top:1029.14px;font-size:25px;line-height:25px;color:#282c35;">3</div><div class="t" style="left:1421.20px;top:1029.14px;font-size:25px;line-height:25px;color:#282c35;letter-spacing:0.183px;max-width:480px;overflow:hidden;">Lakeside Retreat with Private Dock</div><div class="t" style="left:248.00px;top:1109.14px;font-size:25px;line-height:25px;color:#1e222c;letter-spacing:-0.054px;-webkit-text-stroke:0.25px currentColor;">1122 Lake Woodlands Dr, The Woo...</div><div class="t" style="left:745.30px;top:1109.14px;font-size:25px;line-height:25px;color:#282c35;letter-spacing:-0.103px;">The Woodlan...</div><div class="t" style="left:965.30px;top:1109.14px;font-size:25px;line-height:25px;color:#282c35;letter-spacing:0.538px;">3,800 sqft</div><div class="t" style="left:1223.20px;top:1109.14px;font-size:25px;line-height:25px;color:#282c35;">3</div><div class="t" style="left:1421.20px;top:1109.14px;font-size:25px;line-height:25px;color:#282c35;letter-spacing:0.183px;max-width:480px;overflow:hidden;">Lakeside Retreat with Private Dock</div><div class="t" style="left:175.20px;top:230.04px;font-size:25px;line-height:25px;color:#282c35;letter-spacing:0.439px;">Name</div><div class="t" style="left:744.30px;top:230.04px;font-size:25px;line-height:25px;color:#282c35;letter-spacing:0.149px;">City</div><div class="t" style="left:963.00px;top:230.04px;font-size:25px;line-height:25px;color:#282c35;letter-spacing:0.320px;">Property Size</div><div class="t" style="left:1221.20px;top:230.04px;font-size:25px;line-height:25px;color:#282c35;letter-spacing:0.266px;">Bedrooms</div><div class="t" style="left:1420.60px;top:230.04px;font-size:25px;line-height:25px;color:#282c35;letter-spacing:0.575px;">Description</div><div class="t" style="left:215.30px;top:140.64px;font-size:25px;line-height:25px;color:#282c35;letter-spacing:0.433px;">Listings</div><div class="t" style="left:464.20px;top:140.64px;font-size:25px;line-height:25px;color:#282c35;letter-spacing:-0.124px;">Columns</div><div class="t" style="left:723.70px;top:140.64px;font-size:25px;line-height:25px;color:#282c35;letter-spacing:0.234px;">Filter</div><div class="t" style="left:1685.00px;top:140.64px;font-size:25px;line-height:25px;color:#282c35;letter-spacing:-0.089px;">Add Files</div><div class="t" style="left:223.30px;top:42.49px;font-size:26px;line-height:26px;color:#282c35;letter-spacing:0.315px;">Real Estate</div><div class="t" style="left:1647.20px;top:41.28px;font-size:24px;line-height:24px;color:#102a22;letter-spacing:0.837px;">Invite</div><div class="t" style="left:1395.20px;top:44.38px;font-size:22px;line-height:22px;color:#111;letter-spacing:0.112px;">DR</div><div class="t" style="left:1509.70px;top:44.38px;font-size:22px;line-height:22px;color:#111;letter-spacing:2.026px;">AJ</div><div class="t" style="left:168.80px;top:42.24px;font-size:25px;line-height:25px;color:#0c1a22;font-weight:700;transform:scaleX(0.8);transform-origin:0 0;">R</div><div class="t" style="left:46.90px;top:1115.54px;font-size:25px;line-height:25px;color:#111;letter-spacing:-2.154px;-webkit-text-stroke:0.25px currentColor;">DR</div>
<svg width="1916" height="1192" viewBox="0 0 1916 1192" style="pointer-events:none"><defs><linearGradient id="fade2" x1="0" x2="1"><stop offset="0" stop-color="#fff" stop-opacity="0"/><stop offset="1" stop-color="#fff" stop-opacity="1"/></linearGradient></defs><rect x="1765" y="201" width="145" height="961" fill="url(#fade2)"/></svg>
</body></html>
